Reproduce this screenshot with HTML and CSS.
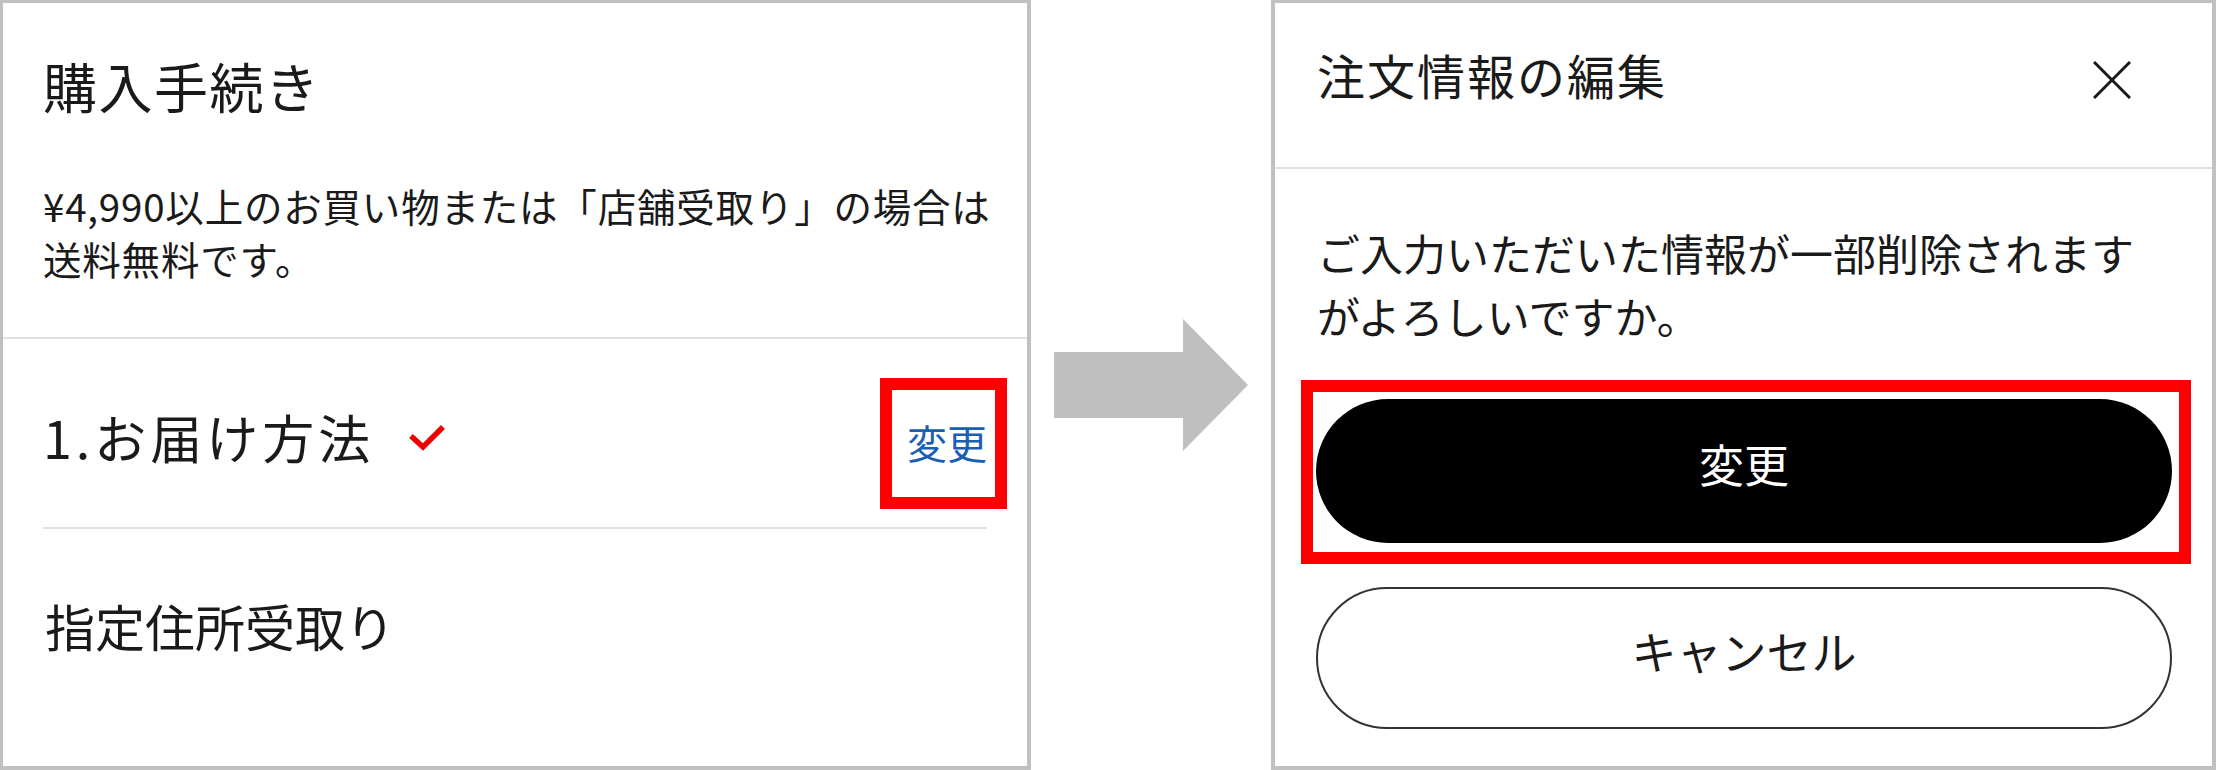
FILE: index.html
```html
<!DOCTYPE html>
<html lang="ja">
<head>
<meta charset="utf-8">
<title>購入手続き</title>
<link rel="stylesheet" href="styles.css">
</head>
<body>
<div class="page">
  <section class="panel panel-left">
    <div class="intro">
      <h1 class="title">購入手続き</h1>
      <p class="note">¥4,990以上のお買い物または「店舗受取り」の場合は<br>送料無料です。</p>
    </div>
    <div class="step">
      <div class="step-head">
        <h2 class="step-title"><span>1.お届け方法</span><svg class="check" width="40" height="30" viewBox="0 0 40 30"><polyline points="4,12 16,23 36,3" fill="none" stroke="#ee0000" stroke-width="5.5"/></svg></h2>
        <a class="change-link">変更<span class="highlight highlight-link"></span></a>
      </div>
      <div class="step-rule"></div>
      <p class="step-value">指定住所受取り</p>
    </div>
  </section>

  <div class="arrow-area">
    <svg class="arrow" width="194" height="132" viewBox="0 0 194 132"><polygon points="0,33 129,33 129,0 194,66 129,132 129,99 0,99" fill="#bfbfbf"/></svg>
  </div>

  <section class="panel panel-right">
    <header class="dialog-head">
      <h2 class="dialog-title">注文情報の編集</h2>
      <button class="close" type="button" aria-label="閉じる"><svg width="38" height="38" viewBox="0 0 38 38"><path d="M1 1 L37 37 M37 1 L1 37" stroke="#1a1a1a" stroke-width="3" fill="none"/></svg></button>
    </header>
    <div class="dialog-body">
      <p class="dialog-msg">ご入力いただいた情報が一部削除されます<br>がよろしいですか。</p>
      <div class="btn-wrap">
        <button class="btn btn-primary" type="button">変更</button>
        <span class="highlight highlight-btn"></span>
      </div>
      <button class="btn btn-secondary" type="button">キャンセル</button>
    </div>
  </section>
</div>
</body>
</html>
```

FILE: styles.css
```css
* {
  box-sizing: border-box;
}

html, body {
  margin: 0;
  padding: 0;
  background: #ffffff;
}

body {
  font-family: "Noto Sans CJK JP", "Noto Sans", sans-serif;
  color: #1a1a1a;
}

.page {
  display: flex;
  width: 2216px;
  height: 770px;
}

.panel {
  height: 770px;
  border-style: solid;
  border-color: #c0c0c0;
  border-width: 3px 4px 4px 4px;
  background: #ffffff;
}

.panel-left {
  width: 1031px;
  border-left-width: 3px;
}

.panel-right {
  width: 945px;
  display: flex;
  flex-direction: column;
}

/* left panel */
.intro {
  padding: 56px 40px 52.5px 40px;
  border-bottom: 2px solid #e0e0e0;
}

.title {
  margin: 0;
  font-size: 54px;
  line-height: 54px;
  font-weight: 400;
  letter-spacing: 1.5px;
}

.note {
  margin: 65.5px 0 0 0;
  font-size: 38.5px;
  line-height: 53px;
  letter-spacing: 0.8px;
  white-space: nowrap;
}

.step-head {
  display: flex;
  justify-content: space-between;
  align-items: baseline;
  padding: 72px 40px 0 40px;
}

.step-title {
  display: flex;
  align-items: center;
  margin: 0;
  font-size: 52px;
  line-height: 52px;
  font-weight: 400;
  letter-spacing: 4px;
}

.check {
  margin-left: 33px;
  margin-top: 4px;
}

.change-link {
  position: relative;
  font-size: 40px;
  line-height: 40px;
  color: #1a5fb4;
  text-decoration: none;
}

.highlight {
  position: absolute;
  border: 12px solid #ff0000;
  pointer-events: none;
}

.highlight-link {
  left: -27px;
  right: -20px;
  top: -44px;
  bottom: -47px;
}

.step-rule {
  height: 2px;
  margin: 64px 40px 0 40px;
  background: #e0e0e0;
}

.step-value {
  margin: 71px 40px 0 42px;
  font-size: 50px;
  line-height: 50px;
}

/* arrow */
.arrow-area {
  width: 240px;
  display: flex;
  align-items: center;
  justify-content: center;
}

/* right panel */
.dialog-head {
  display: flex;
  justify-content: space-between;
  align-items: flex-start;
  padding: 47px 40px 68px 42px;
  border-bottom: 2px solid #e0e0e0;
}

.dialog-title {
  margin: 0;
  font-size: 48px;
  line-height: 48px;
  font-weight: 400;
  letter-spacing: 2px;
}

.close {
  margin: 11px 41px 0 0;
  padding: 0;
  border: none;
  background: none;
  width: 38px;
  height: 38px;
  display: block;
}

.close svg {
  display: block;
}

.dialog-body {
  padding: 52px 40px 0 41px;
}

.dialog-msg {
  margin: 0 0 0 1px;
  font-size: 43px;
  line-height: 63px;
}

.btn-wrap {
  position: relative;
  margin-top: 52px;
}

.btn {
  display: flex;
  align-items: center;
  justify-content: center;
  width: 856px;
  font-family: "Noto Sans CJK JP", "Noto Sans", sans-serif;
  font-size: 45px;
  line-height: 45px;
  border-radius: 72px;
  padding: 0 0 15px 0;
  cursor: pointer;
}

.btn-primary {
  height: 144px;
  background: #000000;
  color: #ffffff;
  border: none;
}

.highlight-btn {
  left: -15px;
  right: -19px;
  top: -19px;
  bottom: -21px;
}

.btn-secondary {
  margin-top: 44px;
  height: 142px;
  background: #ffffff;
  color: #1a1a1a;
  border: 2px solid #333333;
}
```
